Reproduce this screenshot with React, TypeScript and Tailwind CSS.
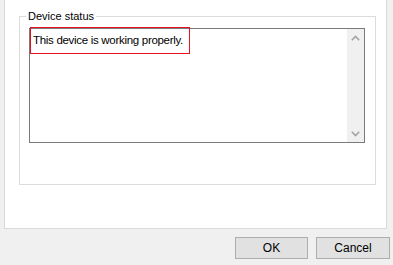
export default function App() {
  return (
    <div className="relative flex h-[265px] w-[393px] flex-col bg-[#f0f0f0] pl-[4px] font-['Liberation_Sans',Arial,sans-serif] text-[11px] text-black">
      <div className="h-[229px] w-[383px] border-x border-b border-[#d9d9d9] bg-white pl-[14px] pt-[9px]">
        <fieldset className="m-0 h-[176px] w-[357px] border border-[#dcdcdc] p-0">
          <legend className="ml-[6px] px-[2px] leading-[14px]">Device status</legend>
          <div className="ml-[9px] mt-[5px] flex h-[115px] w-[336px] border border-[#7a7a7a] bg-white">
            <div className="flex-1 pl-[3px] pt-[4px] text-[11.5px] leading-[14px] tracking-[-0.3px]">
              This device is working properly.
            </div>
            <div className="flex w-[17px] flex-col justify-between bg-[#f0f0f0]">
              <div className="flex h-[17px] items-center justify-center">
                <svg width="9" height="6" viewBox="0 0 9 6">
                  <path d="M0.8 5.2 L4.5 1.5 L8.2 5.2" fill="none" stroke="#a3a3a3" strokeWidth="1.6" />
                </svg>
              </div>
              <div className="flex h-[17px] items-center justify-center">
                <svg width="9" height="6" viewBox="0 0 9 6">
                  <path d="M0.8 0.8 L4.5 4.5 L8.2 0.8" fill="none" stroke="#a3a3a3" strokeWidth="1.6" />
                </svg>
              </div>
            </div>
          </div>
        </fieldset>
      </div>
      <div className="mt-[8px] flex gap-[8px] pl-[231px] text-[12px]">
        <button className="h-[22px] w-[73px] border border-[#adadad] bg-[#e1e1e1] leading-[20px]">OK</button>
        <button className="h-[22px] w-[74px] border border-[#adadad] bg-[#e1e1e1] leading-[20px]">Cancel</button>
      </div>
      <div className="pointer-events-none absolute left-[30px] top-[27px] h-[27px] w-[160px] border border-[#e81123]" />
    </div>
  );
}
